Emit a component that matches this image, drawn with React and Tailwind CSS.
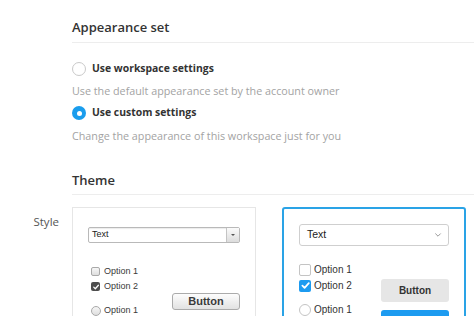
import React from "react";

function Radio({ checked }) {
  if (checked) {
    return (
      <span className="flex h-[14px] w-[14px] shrink-0 items-center justify-center rounded-full bg-[#1a9ded]">
        <span className="h-[5px] w-[5px] rounded-full bg-white" />
      </span>
    );
  }
  return <span className="h-[14px] w-[14px] shrink-0 rounded-full border border-[#c9c9c9] bg-white" />;
}

function Check({ color = "#fff" }) {
  return (
    <svg viewBox="0 0 12 12" className="h-full w-full" fill="none">
      <path d="M2.6 6.2 L5 8.6 L9.6 3.4" stroke={color} strokeWidth="1.9" strokeLinecap="round" strokeLinejoin="round" />
    </svg>
  );
}

function LegacyCard() {
  return (
    <div className="h-[140px] w-[184px] shrink-0 border border-[#e6e6e6] bg-white px-[15px] pt-[19px] font-['Liberation_Sans',Arial,sans-serif]">
      <div className="flex h-[16px] items-stretch rounded-[2px] border border-[#b9b9b9] bg-white shadow-[inset_0_1px_1px_rgba(0,0,0,0.08)]">
        <span className="flex flex-1 items-center pl-[3px] text-[9px] text-[#222]">Text</span>
        <span className="flex w-[13px] items-center justify-center border-l border-[#c4c4c4] bg-gradient-to-b from-[#fbfbfb] to-[#dcdcdc]">
          <span className="h-0 w-0 border-x-[2px] border-t-[2px] border-x-transparent border-t-[#555]" />
        </span>
      </div>
      <div className="mt-[21px] flex justify-between">
        <div className="flex flex-col pl-[3px] text-[9px] text-[#3a3a3a]">
          <div className="flex h-[15px] items-center gap-[4px]">
            <span className="h-[9px] w-[9px] rounded-[2px] border border-[#a9a9a9] bg-gradient-to-b from-[#f6f6f6] to-[#dedede]" />
            <span>Option 1</span>
          </div>
          <div className="flex h-[15px] items-center gap-[4px]">
            <span className="h-[9px] w-[9px] rounded-[2px] bg-[#4d4d4d] p-[0.5px]">
              <Check />
            </span>
            <span>Option 2</span>
          </div>
          <div className="mt-[9px] flex h-[15px] items-center gap-[3px]">
            <span className="h-[10px] w-[10px] rounded-full border border-[#a9a9a9] bg-gradient-to-b from-[#f6f6f6] to-[#dedede]" />
            <span>Option 1</span>
          </div>
          <div className="flex h-[15px] items-center gap-[3px]">
            <span className="h-[10px] w-[10px] rounded-full border border-[#a9a9a9] bg-gradient-to-b from-[#f6f6f6] to-[#dedede]" />
            <span>Option 2</span>
          </div>
        </div>
        <div className="flex flex-col gap-[12px] pt-[29px]">
          <div className="flex h-[17px] w-[68px] items-center justify-center rounded-[3px] border border-[#ababab] bg-gradient-to-b from-[#fdfdfd] to-[#e2e2e2] text-[11px] font-bold text-[#3a3a3a]">
            Button
          </div>
          <div className="flex h-[17px] w-[68px] items-center justify-center rounded-[3px] border border-[#3a7bd5] bg-gradient-to-b from-[#7db7f5] to-[#3a86e8] text-[11px] font-bold text-white">
            Button
          </div>
        </div>
      </div>
    </div>
  );
}

function ModernCard() {
  return (
    <div className="h-[140px] w-[184px] shrink-0 rounded-[3px] border-2 border-[#2aa3e6] bg-white px-[15px] pt-[15px] font-['Liberation_Sans',Arial,sans-serif]">
      <div className="flex h-[22px] items-center justify-between rounded-[3px] border border-[#cfcfcf] bg-white pl-[7px] pr-[6px]">
        <span className="text-[10.5px] text-[#222]">Text</span>
        <svg viewBox="0 0 10 10" className="h-[8px] w-[8px]" fill="none">
          <path d="M2 3.5 L5 6.5 L8 3.5" stroke="#8a8a8a" strokeWidth="1.1" strokeLinecap="round" strokeLinejoin="round" />
        </svg>
      </div>
      <div className="mt-[16px] flex justify-between">
        <div className="flex flex-col text-[10px] text-[#333]">
          <div className="flex h-[15px] items-center gap-[3px]">
            <span className="h-[12px] w-[12px] rounded-[2px] border border-[#c4c4c4] bg-white" />
            <span>Option 1</span>
          </div>
          <div className="mt-[1px] flex h-[15px] items-center gap-[3px]">
            <span className="h-[12px] w-[12px] rounded-[2px] bg-[#1d9bf0] p-[0.5px]">
              <Check />
            </span>
            <span>Option 2</span>
          </div>
          <div className="mt-[9px] flex h-[15px] items-center gap-[3px]">
            <span className="h-[12px] w-[12px] rounded-full border border-[#c4c4c4] bg-white" />
            <span>Option 1</span>
          </div>
        </div>
        <div className="flex flex-col gap-[8px] pt-[17px]">
          <div className="flex h-[23px] w-[68px] items-center justify-center rounded-[3px] bg-[#e6e6e6] text-[10px] font-bold text-[#333]">
            Button
          </div>
          <div className="flex h-[23px] w-[68px] items-center justify-center rounded-[3px] bg-[#1d9bf0] text-[10px] font-bold text-white">
            Button
          </div>
        </div>
      </div>
    </div>
  );
}

export default function App() {
  return (
    <div className="h-[316px] w-[474px] overflow-hidden bg-white font-['Open_Sans',sans-serif] text-[#333]">
      <div className="pl-[72px] pt-[17px]">
        <h2 className="border-b border-[#ededed] pb-[5px] text-[13px] font-semibold leading-[20px] text-[#333]">
          Appearance set
        </h2>
        <div className="pt-[16px]">
          <label className="flex h-[20px] items-center gap-[6px]">
            <Radio />
            <span className="text-[10.4px] font-bold">Use workspace settings</span>
          </label>
          <p className="mt-[2px] h-[20px] text-[10.75px] leading-[20px] text-[#a3a3a3]">
            Use the default appearance set by the account owner
          </p>
          <label className="mt-[2px] flex h-[20px] items-center gap-[6px]">
            <Radio checked />
            <span className="text-[10.4px] font-bold">Use custom settings</span>
          </label>
          <p className="mt-[3px] h-[20px] text-[10.75px] leading-[20px] text-[#a3a3a3]">
            Change the appearance of this workspace just for you
          </p>
        </div>
        <h2 className="mt-[24px] border-b border-[#ededed] pb-[4px] text-[13px] font-semibold leading-[20px] text-[#333]">
          Theme
        </h2>
      </div>
      <div className="mt-[12px] flex">
        <div className="w-[72px] shrink-0 pr-[13px] pt-[5px] text-right text-[11.5px] leading-[20px] text-[#555]">
          Style
        </div>
        <div className="flex gap-[26px]">
          <LegacyCard />
          <ModernCard />
        </div>
      </div>
    </div>
  );
}
